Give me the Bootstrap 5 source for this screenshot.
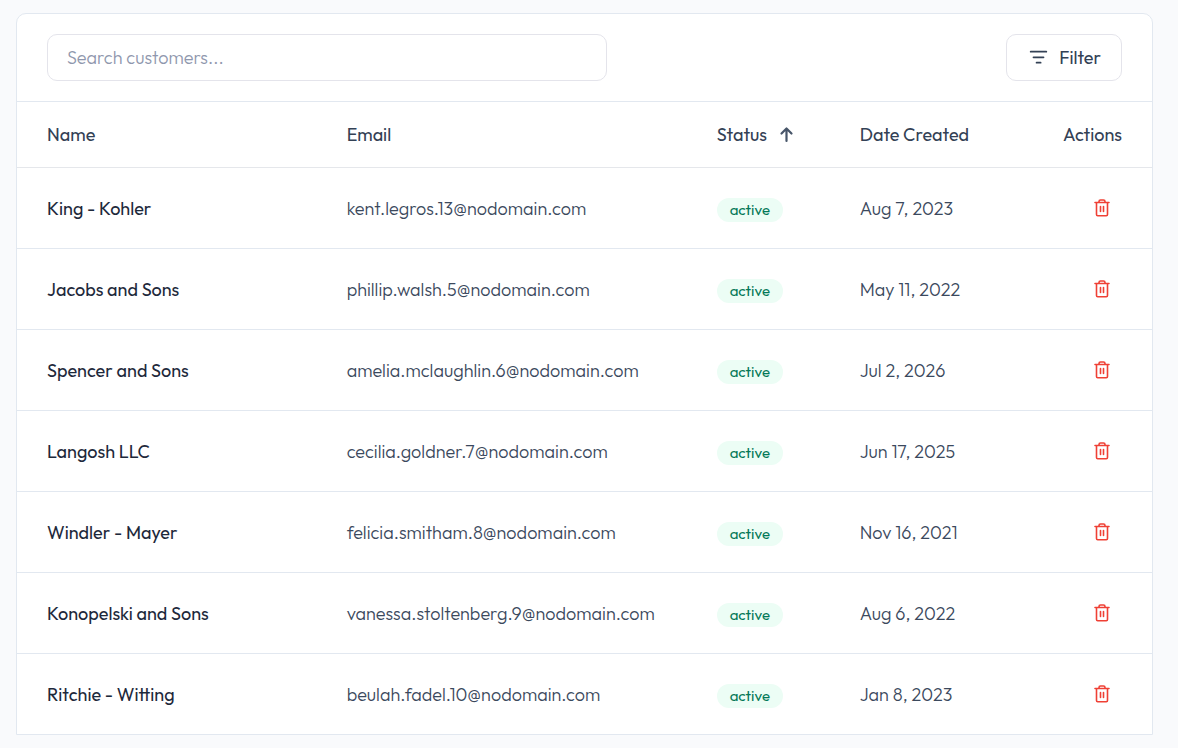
<!DOCTYPE html>
<html lang="en">
<head>
<meta charset="utf-8">
<meta name="viewport" content="width=device-width, initial-scale=1">
<title>Customers</title>
<link href="https://cdn.jsdelivr.net/npm/bootstrap@5.3.0/dist/css/bootstrap.min.css" rel="stylesheet">
<style>
  body { background: #f9fafc; font-family: Outfit, Lato, sans-serif; font-size: 18px; font-weight: 300; line-height: 26px; color: #475569; }
  .page { padding: 13px 25px 13px 16px; }
  .panel { border: 1px solid #e2e8f0; border-radius: 10px 10px 0 0; }
  .toolbar { padding: 20px 30px; border-bottom: 1px solid #e2e8f0; }
  .search { max-width: 560px; }
  .search .form-control { height: 47px; padding: 9px 19px; border-color: #e4e4eb; border-radius: 10px; font-size: 18px; font-weight: 300; line-height: 26px; }
  .search .form-control::placeholder { color: #8f97ad; }
  .btn-filter { height: 47px; padding: 9px 20px; border: 1px solid #e4e4eb; border-radius: 10px; background: #fff; color: #334155; font-size: 18px; font-weight: 400; line-height: 26px; }
  .customers { --bs-table-color: #3b495d; --bs-table-bg: transparent; table-layout: fixed; }
  .customers th, .customers td { padding: 2px 0 0 30px; border-color: #e2e8f0; vertical-align: middle; white-space: nowrap; }
  .customers thead th { height: 65px; color: #334155; font-weight: 400; border-color: #e5e7eb; }
  .customers tbody th { color: #1e293b; font-weight: 400; }
  .customers tbody tr { height: 81px; }
  .customers tbody tr:last-child > * { border-bottom: 0; }
  .customers tr > :last-child { padding: 0 30px 0 0; text-align: right; }
  .customers thead tr > :last-child { padding-top: 2px; }
  .col-name { width: 26.4%; }
  .col-email { width: 32.6%; }
  .col-status { width: 12.6%; }
  .col-date { width: 16%; }
  .status { padding: 4px 13px; border-radius: 12px; background: #ecfdf5; color: #047857; font-size: 15px; font-weight: 400; line-height: 16px; }
  .btn-delete { padding: 10px; border: 0; color: #ef4035; line-height: 1; }
  svg { display: block; }
</style>
</head>
<body>
<svg width="0" height="0" class="position-absolute" aria-hidden="true">
  <symbol id="trash" viewBox="0 0 20 20" fill="none" stroke="currentColor" stroke-width="1.6" stroke-linecap="round" stroke-linejoin="round">
    <path d="M3 4.500h14M4.500 4.500v12a1.200 1.200 0 0 0 1.200 1.200h8.600a1.200 1.200 0 0 0 1.200-1.200v-12M7 4.200v-.7a1.500 1.500 0 0 1 1.500-1.500h3a1.500 1.500 0 0 1 1.500 1.500v.7M8.500 8.500v5M11.500 8.500v5"/>
  </symbol>
</svg>
<main class="page">
  <section class="card panel">
    <div class="toolbar d-flex justify-content-between align-items-center gap-3">
      <div class="search flex-grow-1">
        <input type="text" class="form-control" placeholder="Search customers..." aria-label="Search customers">
      </div>
      <button type="button" class="btn btn-filter d-flex align-items-center gap-2">
        <svg width="24" height="24" viewBox="0 0 24 24" fill="none" stroke="currentColor" stroke-width="1.800" stroke-linecap="round" aria-hidden="true"><path d="M3.700 5.700h15.600M6.500 11.300h10M9.600 16.700h4"/></svg>
        <span>Filter</span>
      </button>
    </div>
    <table class="table customers mb-0">
      <colgroup><col class="col-name"><col class="col-email"><col class="col-status"><col class="col-date"><col></colgroup>
      <thead>
        <tr>
          <th scope="col">Name</th>
          <th scope="col">Email</th>
          <th scope="col" aria-sort="ascending">
            <span class="d-flex align-items-center gap-2"><span>Status</span>
              <svg width="24" height="24" viewBox="0 0 24 24" fill="none" stroke="#475569" stroke-width="2.200" stroke-linecap="round" stroke-linejoin="round" aria-hidden="true"><path d="M11.500 18V5.500M6.500 10.500l5-5 5 5"/></svg>
            </span>
          </th>
          <th scope="col">Date Created</th>
          <th scope="col">Actions</th>
        </tr>
      </thead>
      <tbody>
        <tr><th scope="row">King - Kohler</th><td>kent.legros.13@nodomain.com</td><td><span class="badge status">active</span></td><td>Aug 7, 2023</td><td><button type="button" class="btn btn-delete" aria-label="Delete King - Kohler"><svg width="20" height="20"><use href="#trash"/></svg></button></td></tr>
        <tr><th scope="row">Jacobs and Sons</th><td>phillip.walsh.5@nodomain.com</td><td><span class="badge status">active</span></td><td>May 11, 2022</td><td><button type="button" class="btn btn-delete" aria-label="Delete Jacobs and Sons"><svg width="20" height="20"><use href="#trash"/></svg></button></td></tr>
        <tr><th scope="row">Spencer and Sons</th><td>amelia.mclaughlin.6@nodomain.com</td><td><span class="badge status">active</span></td><td>Jul 2, 2026</td><td><button type="button" class="btn btn-delete" aria-label="Delete Spencer and Sons"><svg width="20" height="20"><use href="#trash"/></svg></button></td></tr>
        <tr><th scope="row">Langosh LLC</th><td>cecilia.goldner.7@nodomain.com</td><td><span class="badge status">active</span></td><td>Jun 17, 2025</td><td><button type="button" class="btn btn-delete" aria-label="Delete Langosh LLC"><svg width="20" height="20"><use href="#trash"/></svg></button></td></tr>
        <tr><th scope="row">Windler - Mayer</th><td>felicia.smitham.8@nodomain.com</td><td><span class="badge status">active</span></td><td>Nov 16, 2021</td><td><button type="button" class="btn btn-delete" aria-label="Delete Windler - Mayer"><svg width="20" height="20"><use href="#trash"/></svg></button></td></tr>
        <tr><th scope="row">Konopelski and Sons</th><td>vanessa.stoltenberg.9@nodomain.com</td><td><span class="badge status">active</span></td><td>Aug 6, 2022</td><td><button type="button" class="btn btn-delete" aria-label="Delete Konopelski and Sons"><svg width="20" height="20"><use href="#trash"/></svg></button></td></tr>
        <tr><th scope="row">Ritchie - Witting</th><td>beulah.fadel.10@nodomain.com</td><td><span class="badge status">active</span></td><td>Jan 8, 2023</td><td><button type="button" class="btn btn-delete" aria-label="Delete Ritchie - Witting"><svg width="20" height="20"><use href="#trash"/></svg></button></td></tr>
      </tbody>
    </table>
  </section>
</main>
<script src="https://cdn.jsdelivr.net/npm/bootstrap@5.3.0/dist/js/bootstrap.bundle.min.js"></script>
</body>
</html>
